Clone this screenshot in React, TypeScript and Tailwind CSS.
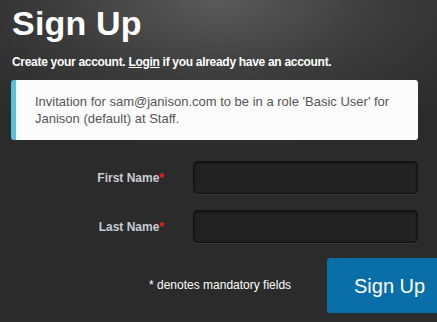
export default function App() {
  return (
    <div
      className="h-[322px] w-[437px] overflow-hidden bg-[#2b2b2b] text-white"
      style={{
        fontFamily: '"Liberation Sans", Arial, sans-serif',
        backgroundImage:
          'radial-gradient(ellipse 320px 150px at 50% 0%, #5a5a5a 0%, #3a3a3a 55%, #2b2b2b 100%)',
      }}
    >
      <div className="pl-[12px] pt-[3px]">
        {/* Heading */}
        <h1 className="text-[34px] font-bold leading-[40px] tracking-[0.2px]">Sign Up</h1>
        <p className="mt-[12px] text-[12px] font-bold leading-[15px] tracking-[-0.3px]">
          Create your account. <a className="underline">Login</a> if you already have an account.
        </p>

        {/* Invitation notice */}
        <div className="mt-[10px] w-[407px] -ml-px rounded-[3px] border-l-[5px] border-[#5bc0de] bg-[#fcfcfc] pb-[13px] pl-[19px] pr-4 pt-[13px] text-[13px] leading-[17px] text-[#555]">
          Invitation for sam@janison.com to be in a role 'Basic User' for
          <br />
          Janison (default) at Staff.
        </div>

        {/* Fields */}
        <div className="mt-[21px] flex flex-col gap-[16px]">
          {['First Name', 'Last Name'].map((label) => (
            <div key={label} className="flex items-center">
              <label className="w-[152px] text-right text-[12px] font-bold text-[#c9cbd3]">
                {label}
                <span className="text-[#ff1a1a]">*</span>
              </label>
              <input
                type="text"
                className="ml-[29px] h-[33px] w-[225px] rounded-[4px] border border-[#121212] bg-[#222] shadow-[inset_0_1px_3px_rgba(0,0,0,0.6),0_1px_0_rgba(255,255,255,0.08)] outline-none"
              />
            </div>
          ))}
        </div>

        {/* Footer */}
        <div className="mt-[15px] flex items-center">
          <span className="ml-[137px] w-[145px] shrink-0 whitespace-nowrap text-[12px] leading-[15px] text-white">
            * denotes mandatory fields
          </span>
          <button
            type="button"
            className="ml-[33px] h-[55px] w-[120px] shrink-0 rounded-[3px] bg-[#0a6fa8] pl-[27px] text-left text-[20px] text-white"
          >
            Sign Up
          </button>
        </div>
      </div>
    </div>
  )
}
